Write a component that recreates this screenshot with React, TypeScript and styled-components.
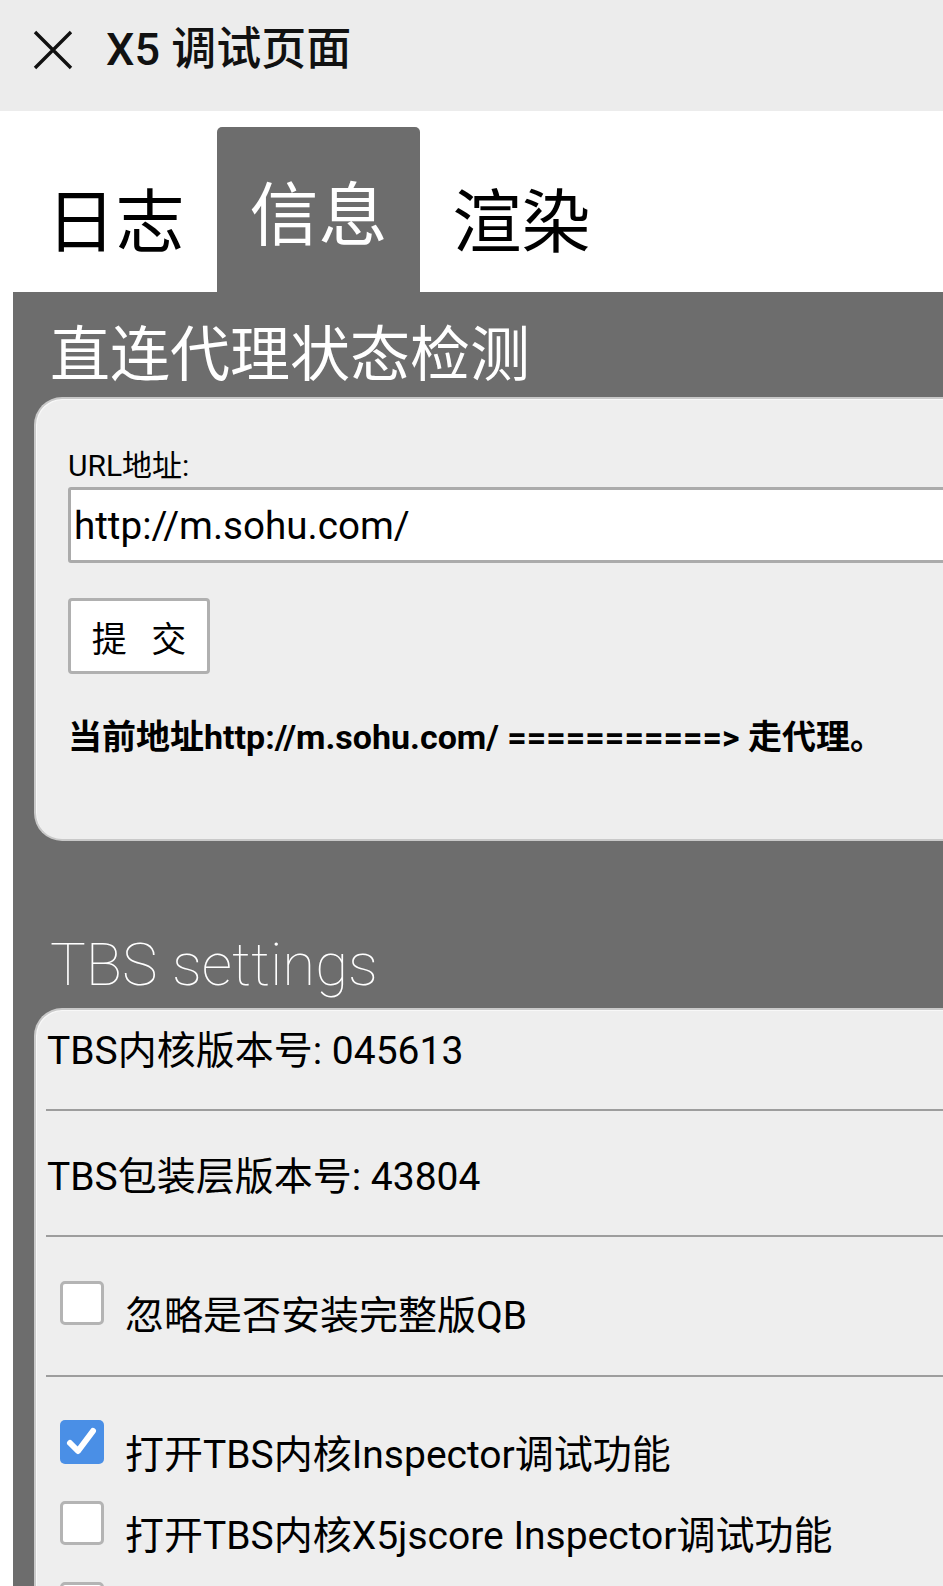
import styled, { createGlobalStyle } from 'styled-components';

const GlobalStyle = createGlobalStyle`
    html, body {
        margin: 0;
        padding: 0;
        overflow: hidden;
        background: #fff;
    }

    body {
        font-family: Roboto, "Noto Sans CJK SC", sans-serif;
        color: #000;
    }

    * {
        box-sizing: border-box;
    }
`;

const TABS = ['日志', '信息', '渲染'];
const ACTIVE_TAB = 1;

function App() {
    return (
        <>
            <GlobalStyle />
            <TopBar>
                <CloseButton aria-label="close">
                    <svg width="40" height="40" viewBox="0 0 40 40">
                        <path
                            d="M2 2 L38 38 M38 2 L2 38"
                            stroke="#111"
                            strokeWidth="3.4"
                            fill="none"
                        />
                    </svg>
                </CloseButton>
                <Title>X5 调试页面</Title>
            </TopBar>

            <Content>
                <TabBar>
                    {TABS.map((t, i) => (
                        <Tab key={t} $active={i === ACTIVE_TAB}>
                            {t}
                        </Tab>
                    ))}
                </TabBar>

                <Panel>
                    <SectionTitle>直连代理状态检测</SectionTitle>
                    <ProxyCard>
                        <FieldLabel>URL地址:</FieldLabel>
                        <UrlInput readOnly value="http://m.sohu.com/" />
                        <SubmitButton>提 交</SubmitButton>
                        <ResultLine>
                            当前地址http://m.sohu.com/ ===========&gt; 走代理。
                        </ResultLine>
                    </ProxyCard>

                    <SectionTitle $thin>TBS settings</SectionTitle>
                    <SettingsCard>
                        <InfoRow $first>TBS内核版本号: 045613</InfoRow>
                        <InfoRow>TBS包装层版本号: 43804</InfoRow>

                        <CheckGroup $divided>
                            <CheckItem>
                                <CheckBox $checked={false} />
                                <CheckLabel>忽略是否安装完整版QB</CheckLabel>
                            </CheckItem>
                        </CheckGroup>

                        <CheckGroup>
                            <CheckItem>
                                <CheckBox $checked>
                                    <svg width="44" height="44" viewBox="0 0 44 44">
                                        <path
                                            d="M10 23 L18 31 L33 11"
                                            stroke="#fff"
                                            strokeWidth="6"
                                            strokeLinecap="round"
                                            strokeLinejoin="round"
                                            fill="none"
                                        />
                                    </svg>
                                </CheckBox>
                                <CheckLabel>打开TBS内核Inspector调试功能</CheckLabel>
                            </CheckItem>
                            <CheckItem>
                                <CheckBox $checked={false} />
                                <CheckLabel>打开TBS内核X5jscore Inspector调试功能</CheckLabel>
                            </CheckItem>
                            <CheckItem>
                                <CheckBox $checked={false} />
                            </CheckItem>
                        </CheckGroup>
                    </SettingsCard>
                </Panel>
            </Content>
        </>
    );
}

export default App;

const TopBar = styled.header`
    display: flex;
    align-items: center;
    height: 111px;
    padding: 0 0 12px 33px;
    background: #ececec;
`;

const CloseButton = styled.div`
    display: flex;
    width: 40px;
    height: 40px;
`;

const Title = styled.h1`
    margin: 0 0 0 33px;
    font-size: 45px;
    font-weight: 500;
    line-height: 1;
    color: #111;
`;

const Content = styled.main`
    padding-left: 13px;
    overflow: hidden;
`;

const TabBar = styled.nav`
    display: flex;
    padding: 16px 0 0 1px;
`;

const Tab = styled.div<{ $active: boolean }>`
    display: flex;
    align-items: flex-end;
    justify-content: center;
    width: 203px;
    height: 165px;
    padding-bottom: ${p => (p.$active ? 41 : 34)}px;
    font-size: 69px;
    line-height: 69px;
    color: ${p => (p.$active ? '#fff' : '#000')};
    background: ${p => (p.$active ? '#6d6d6d' : 'transparent')};
    border-radius: 5px 5px 0 0;
`;

const Panel = styled.section`
    padding: 28px 0 120px 21px;
    background: #6d6d6d;
`;

const SectionTitle = styled.h2<{ $thin?: boolean }>`
    margin: 0 0 ${p => (p.$thin ? 7 : 5)}px 16px;
    font-size: 60px;
    font-weight: ${p => (p.$thin ? 100 : 400)};
    line-height: 72px;
    color: #fff;
    white-space: nowrap;
`;

const Card = styled.div`
    margin-right: -40px;
    background: #eeeeee;
    border: 2px solid #c9c9c9;
    border-right: none;
    border-radius: 28px 0 0 28px;
    box-shadow: inset 1px 1px 0 #f8f8f8;
`;

const ProxyCard = styled(Card)`
    display: flex;
    flex-direction: column;
    align-items: flex-start;
    margin-bottom: 88px;
    padding: 49px 0 80px 32px;
`;

const FieldLabel = styled.label`
    margin-bottom: 3px;
    font-size: 30px;
    line-height: 36px;
`;

const UrlInput = styled.input`
    width: 100%;
    height: 76px;
    padding: 0 3px;
    font-family: Roboto, "Noto Sans CJK SC", sans-serif;
    font-size: 38.6px;
    color: #000;
    background: #fff;
    border: 3px solid #ababab;
    border-radius: 3px;
    outline: none;
`;

const SubmitButton = styled.button`
    width: 142px;
    height: 76px;
    margin-top: 35px;
    padding: 0;
    font-family: Roboto, "Noto Sans CJK SC", sans-serif;
    font-size: 35px;
    word-spacing: 16px;
    color: #000;
    background: #fff;
    border: 3px solid #b0b0b0;
    border-radius: 4px;
`;

const ResultLine = styled.p`
    margin: 41px 0 0;
    font-size: 34px;
    font-weight: 700;
    line-height: 44px;
    white-space: nowrap;
`;

const SettingsCard = styled(Card)`
    padding-left: 10px;
    border-bottom: none;
    border-bottom-left-radius: 0;
`;

const InfoRow = styled.div<{ $first?: boolean }>`
    padding: ${p => (p.$first ? 18 : 43)}px 0 35px 1px;
    font-size: 39px;
    line-height: 46px;
    border-bottom: 2px solid #9d9d9d;
`;

const CheckGroup = styled.div<{ $divided?: boolean }>`
    display: flex;
    flex-direction: column;
    gap: 23px;
    padding: ${p => (p.$divided ? '44px 0 36px 14px' : '43px 0 0 14px')};
    border-bottom: ${p => (p.$divided ? '2px solid #9d9d9d' : 'none')};
`;

const CheckItem = styled.div`
    display: flex;
    align-items: flex-start;
    gap: 21px;
    min-height: 58px;
`;

const CheckBox = styled.span<{ $checked: boolean }>`
    display: flex;
    flex: none;
    width: 44px;
    height: 44px;
    background: ${p => (p.$checked ? '#4a8fe6' : '#fff')};
    border: ${p => (p.$checked ? 'none' : '3px solid #b4b4b4')};
    border-radius: 5px;
`;

const CheckLabel = styled.span`
    margin-top: 12px;
    font-size: 39px;
    line-height: 46px;
    white-space: nowrap;
`;
